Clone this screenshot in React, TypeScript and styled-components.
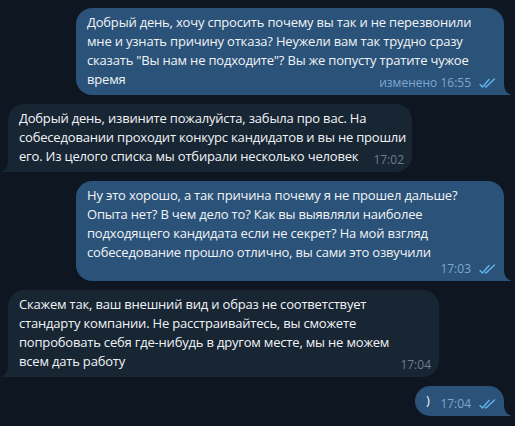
import React from "react";
import styled, { createGlobalStyle } from "styled-components";

const Global = createGlobalStyle`
  html, body { margin: 0; padding: 0; background: #0e1621; }
  body { font-family: "Open Sans", "Noto Sans", sans-serif; }
`;

const Page = styled.div`
  width: 515px;
  height: 426px;
  overflow: hidden;
  box-sizing: border-box;
  padding: 8px 0 0 0;
  display: flex;
  flex-direction: column;
  gap: 9px;
  background: #0e1621;
`;

const Row = styled.div<{ $out?: boolean }>`
  display: flex;
  justify-content: ${(p) => (p.$out ? "flex-end" : "flex-start")};
  padding: ${(p) => (p.$out ? "0 11px 0 0" : "0 0 0 8px")};
`;

const Bubble = styled.div<{ $out?: boolean; $w: number }>`
  position: relative;
  box-sizing: border-box;
  width: ${(p) => p.$w}px;
  padding: 5px 8px 6px 11px;
  border-radius: 16px;
  ${(p) =>
    p.$out ? "border-bottom-right-radius: 0;" : "border-bottom-left-radius: 0;"}
  background: ${(p) => (p.$out ? "#2b5278" : "#182533")};
  color: #f1f4f7;
  font-size: 13px;
  letter-spacing: -0.19px;
  line-height: 19px;
`;

const Tail = styled.svg<{ $out?: boolean }>`
  position: absolute;
  bottom: 0;
  width: 7px;
  height: 12px;
  ${(p) => (p.$out ? "right: -7px;" : "left: -7px; transform: scaleX(-1);")}
  fill: ${(p) => (p.$out ? "#2b5278" : "#182533")};
`;

const Line = styled.div`
  white-space: nowrap;
`;

const LastRow = styled.div`
  display: flex;
  align-items: flex-end;
  justify-content: space-between;
  white-space: nowrap;
`;

const Meta = styled.div<{ $out?: boolean }>`
  margin-left: auto;
  display: flex;
  align-items: center;
  gap: 8px;
  font-size: 12px;
  letter-spacing: 0;
  line-height: 13px;
  color: ${(p) => (p.$out ? "#7da8d3" : "#6d7f8f")};
  white-space: nowrap;
`;

const MetaRow = styled.div`
  display: flex;
  justify-content: flex-end;
`;

const Checks = styled.svg`
  width: 17px;
  height: 10px;
  fill: none;
  stroke: #64b5ef;
  stroke-width: 1.4;
  stroke-linecap: round;
  stroke-linejoin: round;
`;

const DoubleCheck = () => (
  <Checks viewBox="0 0 17 10">
    <path d="M1 6.5 L3.5 9 L10 1.5" />
    <path d="M6.5 8.5 L7 9 L15.5 1" />
  </Checks>
);

const BubbleTail = ({ out }: { out?: boolean }) => (
  <Tail $out={out} viewBox="0 0 7 12">
    <path d="M0 0 C0 6 2 10 6 11.2 C7 11.5 7 12 6 12 L0 12 Z" />
  </Tail>
);

type Msg = {
  out?: boolean;
  w: number;
  lines: string[];
  time: string;
  timeOwnRow?: boolean;
};

const messages: Msg[] = [
  {
    out: true,
    w: 428,
    lines: [
      "Добрый день, хочу спросить почему вы так и не перезвонили",
      "мне и узнать причину отказа? Неужели вам так трудно сразу",
      "сказать \"Вы нам не подходите\"? Вы же попусту тратите чужое",
      "время",
    ],
    time: "изменено 16:55",
  },
  {
    w: 404,
    lines: [
      "Добрый день, извините пожалуйста, забыла про вас. На",
      "собеседовании проходит конкурс кандидатов и вы не прошли",
      "его. Из целого списка мы отбирали несколько человек",
    ],
    time: "17:02",
  },
  {
    out: true,
    w: 428,
    lines: [
      "Ну это хорошо, а так причина почему я не прошел дальше?",
      "Опыта нет? В чем дело то? Как вы выявляли наиболее",
      "подходящего кандидата если не секрет? На мой взгляд",
      "собеседование прошло отлично, вы сами это озвучили",
    ],
    time: "17:03",
    timeOwnRow: true,
  },
  {
    w: 431,
    lines: [
      "Скажем так, ваш внешний вид и образ не соответствует",
      "стандарту компании. Не расстраивайтесь, вы сможете",
      "попробовать себя где-нибудь в другом месте, мы не можем",
      "всем дать работу",
    ],
    time: "17:04",
  },
  {
    out: true,
    w: 89,
    lines: [")"],
    time: "17:04",
  },
];

const MetaInfo = ({ out, time }: { out?: boolean; time: string }) => (
  <Meta $out={out}>
    <span>{time}</span>
    {out && <DoubleCheck />}
  </Meta>
);

export default function App() {
  return (
    <>
      <Global />
      <Page>
        {messages.map((m, i) => {
          const body = m.timeOwnRow ? m.lines : m.lines.slice(0, -1);
          const last = m.timeOwnRow ? null : m.lines[m.lines.length - 1];
          return (
            <Row key={i} $out={m.out}>
              <Bubble $out={m.out} $w={m.w}>
                {body.map((l, j) => (
                  <Line key={j}>{l}</Line>
                ))}
                {last !== null ? (
                  <LastRow>
                    <span>{last}</span>
                    <MetaInfo out={m.out} time={m.time} />
                  </LastRow>
                ) : (
                  <MetaRow>
                    <MetaInfo out={m.out} time={m.time} />
                  </MetaRow>
                )}
                <BubbleTail out={m.out} />
              </Bubble>
            </Row>
          );
        })}
      </Page>
    </>
  );
}
